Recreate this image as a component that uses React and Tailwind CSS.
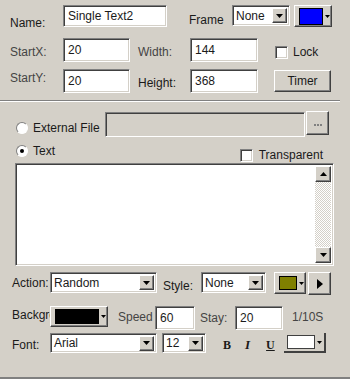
import React from "react";

const sunken =
  "border border-t-[#808080] border-l-[#808080] border-b-white border-r-white shadow-[inset_1px_1px_0_#404040,inset_-1px_-1px_0_#d4d0c8]";
const raised =
  "border border-t-white border-l-white border-b-[#404040] border-r-[#404040] shadow-[inset_-1px_-1px_0_#808080]";

const Tri = ({ up }) => (
  <svg width="7" height="4" viewBox="0 0 7 4">
    <path d={up ? "M3.5 0L7 4H0z" : "M0 0h7L3.5 4z"} fill="#000" />
  </svg>
);

const Input = ({ w, h = "h-[24px]", children }) => (
  <div className={`${sunken} ${w} ${h} bg-white flex items-center pl-[4px] shrink-0`}>{children}</div>
);

const Select = ({ w, h = "h-[21px]", children }) => (
  <div className={`${sunken} ${w} ${h} bg-white flex items-center justify-between pl-[3px] pr-[2px] shrink-0`}>
    <span>{children}</span>
    <div className={`${raised} bg-[#d4d0c8] w-[15px] h-[15px] flex items-center justify-center`}>
      <Tri />
    </div>
  </div>
);

const ColorBtn = ({ w, h, swatch, sw }) => (
  <div className={`${raised} ${w} ${h} bg-[#d4d0c8] flex items-center pl-[4px] gap-[2px] shrink-0`}>
    <div className={`${sw} ${swatch} border border-black`} />
    <svg width="5" height="3" viewBox="0 0 5 3">
      <path d="M0 0h5L2.5 3z" fill="#000" />
    </svg>
  </div>
);

const Check = () => <div className={`${sunken} w-[13px] h-[13px] bg-white shrink-0`} />;

const Radio = ({ on }) => (
  <div className="w-[12px] h-[12px] rounded-full border border-t-[#808080] border-l-[#808080] border-b-white border-r-white bg-white flex items-center justify-center shrink-0">
    {on && <div className="w-[4px] h-[4px] rounded-full bg-black" />}
  </div>
);

export default function App() {
  return (
    <div className="w-[350px] h-[379px] bg-[#d4d0c8] font-['Liberation_Sans',Arial,sans-serif] text-[12px] leading-[14px] text-[#1a1a1a] overflow-hidden flex flex-col border-b-2 border-b-[#808080]">
      {/* row 1 */}
      <div className="flex items-start mt-[5px] h-[22px]">
        <span className="w-[63px] pl-[10px] mt-[11px] shrink-0">Name:</span>
        <Input w="w-[104px]" h="h-[22px]">Single Text2</Input>
        <span className="ml-[22px] w-[43px] mt-[8px] shrink-0">Frame</span>
        <Select w="w-[58px]" h="h-[21px]">None</Select>
        <div className="ml-[4px]">
          <ColorBtn w="w-[38px]" h="h-[22px]" sw="w-[24px] h-[17px]" swatch="bg-[#0000ff]" />
        </div>
      </div>

      {/* row 2 */}
      <div className="flex items-start mt-[11px] h-[24px]">
        <span className="w-[63px] pl-[10px] mt-[7px] shrink-0 text-[#444]">StartX:</span>
        <Input w="w-[67px]">20</Input>
        <span className="ml-[8px] w-[52px] mt-[7px] shrink-0 text-[#444]">Width:</span>
        <Input w="w-[68px]">144</Input>
        <div className="ml-[17px] mt-[7px] flex items-center gap-[5px]">
          <Check />
          <span>Lock</span>
        </div>
      </div>

      {/* row 3 */}
      <div className="flex items-start mt-[7px] h-[24px]">
        <span className="w-[63px] pl-[10px] mt-[2px] shrink-0 text-[#444]">StartY:</span>
        <Input w="w-[67px]">20</Input>
        <span className="ml-[8px] w-[52px] mt-[7px] shrink-0">Height:</span>
        <Input w="w-[68px]">368</Input>
        <div className={`${raised} ml-[16px] mt-[1px] w-[57px] h-[22px] flex items-center justify-center bg-[#d4d0c8]`}>Timer</div>
      </div>

      {/* separator */}
      <div className="mt-[7px] w-[340px] border-t border-t-[#808080] border-b border-b-white" />

      {/* external file */}
      <div className="flex items-start mt-[10px] h-[25px]">
        <div className="ml-[16px] mt-[10px]">
          <Radio />
        </div>
        <span className="ml-[5px] mt-[9px] w-[72px] shrink-0">External File</span>
        <div className={`${sunken} w-[200px] h-[25px] bg-[#d4d0c8]`} />
        <div className={`${raised} ml-[1px] -mt-[1px] w-[23px] h-[24px] bg-[#d4d0c8] flex items-center justify-center gap-[1px] pt-[3px]`}>
          <div className="w-[2px] h-[2px] bg-[#808080]" />
          <div className="w-[2px] h-[2px] bg-[#808080]" />
          <div className="w-[2px] h-[2px] bg-[#808080]" />
        </div>
      </div>

      {/* text */}
      <div className="flex items-start mt-[7px] h-[18px]">
        <div className="ml-[16px] mt-[1px]">
          <Radio on />
        </div>
        <span className="ml-[5px]">Text</span>
        <div className="ml-auto mr-[27px] flex items-center gap-[6px] mt-[4px]">
          <Check />
          <span>Transparent</span>
        </div>
      </div>

      {/* textarea */}
      <div className={`${sunken} ml-[15px] mt-[1px] w-[319px] h-[103px] bg-white flex justify-end p-[2px]`}>
        <div className="w-[16px] h-full flex flex-col bg-[repeating-conic-gradient(#d4d0c8_0_25%,#ffffff_0_50%)] bg-[length:2px_2px]">
          <div className={`${raised} h-[16px] bg-[#d4d0c8] flex items-center justify-center`}>
            <Tri up />
          </div>
          <div className="flex-1" />
          <div className={`${raised} h-[16px] bg-[#d4d0c8] flex items-center justify-center`}>
            <Tri />
          </div>
        </div>
      </div>

      {/* action */}
      <div className="flex items-start mt-[6px] h-[22px]">
        <span className="w-[50px] pl-[12px] mt-[4px] shrink-0">Action:</span>
        <Select w="w-[107px]">Random</Select>
        <span className="ml-[6px] w-[38px] mt-[7px] shrink-0">Style:</span>
        <Select w="w-[65px]">None</Select>
        <div className="ml-[8px]">
          <ColorBtn w="w-[32px]" h="h-[22px]" sw="w-[18px] h-[14px]" swatch="bg-[#808000]" />
        </div>
        <div className={`${raised} ml-[2px] w-[23px] h-[23px] bg-[#d4d0c8] flex items-center justify-center`}>
          <svg width="6" height="10" viewBox="0 0 6 10">
            <path d="M0 0l6 5-6 5z" fill="#000" />
          </svg>
        </div>
      </div>

      {/* background */}
      <div className="flex items-start mt-[12px] h-[24px]">
        <span className="w-[38px] ml-[12px] mt-[2px] overflow-hidden whitespace-nowrap shrink-0">Background</span>
        <ColorBtn w="w-[58px]" h="h-[21px]" sw="w-[44px] h-[15px]" swatch="bg-black" />
        <span className="ml-[10px] w-[37px] mt-[4px] shrink-0 text-[#444]">Speed</span>
        <Input w="w-[40px]" h="h-[24px]">60</Input>
        <span className="ml-[5px] w-[35px] mt-[5px] shrink-0 text-[#444]">Stay:</span>
        <Input w="w-[48px]" h="h-[24px]">20</Input>
        <span className="ml-[9px] mt-[4px] text-[#444]">1/10S</span>
      </div>

      {/* font */}
      <div className="flex items-center mt-[3px] h-[20px]">
        <span className="w-[38px] ml-[12px] pt-[4px] shrink-0">Font:</span>
        <Select w="w-[107px]" h="h-[20px]">Arial</Select>
        <div className="ml-[5px]">
          <Select w="w-[44px]" h="h-[20px]">12</Select>
        </div>
        <span className="ml-[17px] mt-[3px] font-['Liberation_Serif',serif] font-bold text-[12px]">B</span>
        <span className="ml-[14px] mt-[3px] font-['Liberation_Serif',serif] font-bold italic text-[13px]">I</span>
        <span className="ml-[16px] mt-[3px] font-['Liberation_Serif',serif] font-bold underline text-[12px]">U</span>
        <div className="ml-[9px] w-[42px] h-[20px] border-r-2 border-b-2 border-[#404040] flex items-center pl-[3px] gap-[2px]">
          <div className="w-[28px] h-[14px] bg-white border border-[#404040]" />
          <svg width="5" height="3" viewBox="0 0 5 3">
            <path d="M0 0h5L2.5 3z" fill="#000" />
          </svg>
        </div>
      </div>
    </div>
  );
}
